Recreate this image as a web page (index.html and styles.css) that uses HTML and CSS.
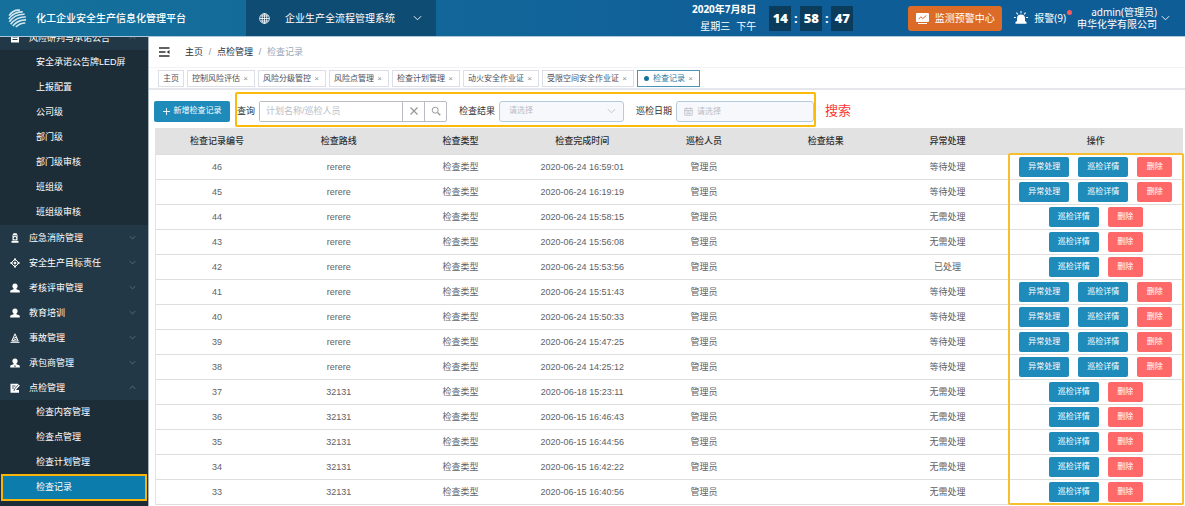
FILE: index.html
```html
<!DOCTYPE html>
<html lang="zh-CN">
<head>
<meta charset="utf-8">
<title>化工企业安全生产信息化管理平台</title>
<link rel="stylesheet" href="styles.css">
</head>
<body>
<svg class="defs" aria-hidden="true">
  <symbol id="down" viewBox="0 0 10 6"><path d="M1 1l4 4 4-4" fill="none" stroke="currentColor"/></symbol>
  <symbol id="up" viewBox="0 0 10 6"><path d="M1 5l4-4 4 4" fill="none" stroke="currentColor"/></symbol>
  <symbol id="user" viewBox="0 0 10 10"><path d="M5 .5c1.700 0 2.600 1.200 2.600 2.600 0 1-.5 2-1.200 2.500v.7l2.800 1c.4.200.6.500.6.900V9.500H.2V8.200c0-.4.2-.7.6-.9l2.800-1v-.7C2.900 5.100 2.400 4.100 2.400 3.100 2.400 1.700 3.300.5 5 .5z" fill="currentColor"/></symbol>
</svg>
<header class="topbar">
  <div class="brand">
    <svg class="logo" viewBox="0 0 20 20" fill="none" stroke="#d3e6ef" stroke-width="1.700"><path d="M1.200 7C4 2.500 8 .8 12.500 1.200M.9 10.500C4.500 5 9 2.800 15.500 3M1.400 13.500C5.500 7.500 10.500 5.200 17.500 5.500M2.800 16C7 10.500 12 8 18.800 8.400M5 17.800c3.500-4 8-6.600 14-6.400M8.200 19c2.500-2.600 5.500-4.300 10-4.300"/></svg>
    <span>化工企业安全生产信息化管理平台</span>
  </div>
  <button class="system" type="button">
    <svg class="globe" viewBox="0 0 12 12" fill="none" stroke="currentColor" stroke-width=".9"><circle cx="6" cy="6" r="5.300"/><ellipse cx="6" cy="6" rx="2.500" ry="5.300"/><path d="M6 .7v10.600M.7 6h10.600M1.500 3.300h9M1.500 8.700h9"/></svg>
    <span class="system-name">企业生产全流程管理系统</span>
    <svg class="chev"><use href="#down"/></svg>
  </button>
  <div class="today"><strong>2020年7月8日</strong><span class="weekday"><span>星期三</span><span>下午</span></span></div>
  <div class="clock"><b>14</b><i>:</i><b>58</b><i>:</i><b>47</b></div>
  <button class="monitor" type="button">
    <svg class="monitor-icon" viewBox="0 0 13 11"><path d="M1 0h11a1 1 0 0 1 1 1v7a1 1 0 0 1-1 1H1a1 1 0 0 1-1-1V1a1 1 0 0 1 1-1zM2 10h9v1H2z" fill="#fff"/><path d="M2.500 6.300l2.300-2.500 2 1.700 3.600-3" fill="none" stroke="#dc6b28"/></svg>
    <span>监测预警中心</span>
  </button>
  <button class="alarm" type="button">
    <svg class="bell" viewBox="0 0 14 14" fill="currentColor"><path d="M3 10V7.500a4 4 0 0 1 8 0V10l1.500 1v1.800h-11V11zM6.500 0h1v2.300h-1zM2 2l.8-.7 1.500 1.700-.8.700zM11.200 1.300l.8.700-1.500 1.700-.8-.7zM0 6h1.800v1H0zM12.200 6H14v1h-1.800z"/></svg>
    <span>报警(9)</span><span class="dot"></span>
  </button>
  <button class="account" type="button">
    <span class="who"><span>admin(管理员)</span><span>申华化学有限公司</span></span>
    <svg class="chev"><use href="#down"/></svg>
  </button>
</header>
<div class="body">
<nav class="side">
  <a class="group first" href="#"><svg viewBox="0 0 10 10"><path d="M1 1h8v8.500H1z" fill="currentColor"/><path d="M2.500 4h5M2.500 6.500h5" stroke="#223846"/></svg><span>风险研判与承诺公告</span><svg class="arrow"><use href="#up"/></svg></a>
  <a class="item" href="#">安全承诺公告牌LED屏</a>
  <a class="item" href="#">上报配置</a>
  <a class="item" href="#">公司级</a>
  <a class="item" href="#">部门级</a>
  <a class="item" href="#">部门级审核</a>
  <a class="item" href="#">班组级</a>
  <a class="item" href="#">班组级审核</a>
  <a class="group" href="#"><svg viewBox="0 0 10 10"><path d="M3.500.3h3l1 1.700v5.500h-5V2zM1.500 8h7v1.700h-7z" fill="currentColor"/><path d="M3 2.700h4" stroke="#223846" stroke-width=".7"/><circle cx="5" cy="5.300" r="1.200" fill="#223846"/></svg><span>应急消防管理</span><svg class="arrow"><use href="#down"/></svg></a>
  <a class="group" href="#"><svg viewBox="0 0 10 10" fill="none" stroke="currentColor"><path d="M5 1l4 4-4 4-4-4zM5 0v3M5 7v3M0 5h3M7 5h3"/><circle cx="5" cy="5" r="1" fill="currentColor"/></svg><span>安全生产目标责任</span><svg class="arrow"><use href="#down"/></svg></a>
  <a class="group" href="#"><svg><use href="#user"/></svg><span>考核评审管理</span><svg class="arrow"><use href="#down"/></svg></a>
  <a class="group" href="#"><svg><use href="#user"/></svg><span>教育培训</span><svg class="arrow"><use href="#down"/></svg></a>
  <a class="group" href="#"><svg viewBox="0 0 10 10" fill="none" stroke="currentColor"><path d="M5 .8L8.200 8H1.800zM3.500 5.500l3-1.500M3 7.500l4-1.800M.5 9.300h9"/></svg><span>事故管理</span><svg class="arrow"><use href="#down"/></svg></a>
  <a class="group" href="#"><svg viewBox="0 0 10 10"><use href="#user"/><path d="M5 7l.7 1.200L5 9.500l-.7-1.300z" fill="#223846"/></svg><span>承包商管理</span><svg class="arrow"><use href="#down"/></svg></a>
  <a class="group" href="#"><svg viewBox="0 0 10 10"><path d="M.5.700h7.500l1.500 1.800L6 7h3v2.700H.5z" fill="currentColor"/><path d="M2 3h3.500M2 5h2M4 8l.5-2L8.500 1.500" fill="none" stroke="#223846" stroke-width=".8"/><path d="M5 7l4.500-4.500" stroke="currentColor"/></svg><span>点检管理</span><svg class="arrow"><use href="#up"/></svg></a>
  <a class="item" href="#">检查内容管理</a>
  <a class="item" href="#">检查点管理</a>
  <a class="item" href="#">检查计划管理</a>
  <a class="item current" href="#">检查记录</a>
</nav>
<main class="main">
  <div class="crumbs">
    <svg class="fold" viewBox="0 0 11 10"><path d="M0 1h10.500M0 5h6.500M0 9h10.500" stroke="#303133" stroke-width="1.500"/><path d="M10.500 3v4L7.800 5z" fill="#303133"/></svg>
    <a href="#">主页</a><i>/</i><a href="#">点检管理</a><i>/</i><span class="here">检查记录</span>
  </div>
  <div class="tabs">
    <a class="tab" href="#">主页</a>
    <a class="tab" href="#">控制风险评估<i>×</i></a>
    <a class="tab" href="#">风险分级管控<i>×</i></a>
    <a class="tab" href="#">风险点管理<i>×</i></a>
    <a class="tab" href="#">检查计划管理<i>×</i></a>
    <a class="tab" href="#">动火安全作业证<i>×</i></a>
    <a class="tab" href="#">受限空间安全作业证<i>×</i></a>
    <a class="tab active" href="#">检查记录<i>×</i></a>
  </div>
  <div class="tools">
    <button class="add" type="button"><svg viewBox="0 0 8 8"><path d="M4 0v8M0 4h8" stroke="currentColor"/></svg>新增检查记录</button>
    <form class="search">
      <label for="q">查询</label>
      <div class="query">
        <input id="q" type="text" placeholder="计划名称/巡检人员">
        <button type="button" aria-label="清除"><svg viewBox="0 0 10 10"><path d="M1.500 1.500l7 7M8.500 1.500l-7 7" stroke="currentColor" stroke-width="1.300"/></svg></button>
        <button type="button" aria-label="搜索"><svg viewBox="0 0 10 10" fill="none" stroke="currentColor"><circle cx="4.200" cy="4.200" r="3"/><path d="M6.500 6.500L9.300 9.300" stroke-width="1.300"/></svg></button>
      </div>
      <label for="result">检查结果</label>
      <div class="field result"><select id="result"><option>请选择</option></select><svg class="chev"><use href="#down"/></svg></div>
      <label for="date">巡检日期</label>
      <div class="field date"><svg class="cal" viewBox="0 0 9 9" fill="none" stroke="currentColor" stroke-width=".8"><path d="M.8 1.500h7.400v6.700H.8zM.8 3.500h7.400M2.700.3v2M6.300.3v2M2.300 5h4.400M2.300 6.600h4.400"/></svg><input id="date" type="text" placeholder="请选择"></div>
    </form>
    <span class="note">搜索</span>
  </div>
  <div class="records">
  <table>
    <colgroup><col><col><col><col><col><col><col><col class="col-ops"></colgroup>
    <thead><tr><th>检查记录编号</th><th>检查路线</th><th>检查类型</th><th>检查完成时间</th><th>巡检人员</th><th>检查结果</th><th>异常处理</th><th>操作</th></tr></thead>
    <tbody>
      <tr><td>46</td><td>rerere</td><td>检查类型</td><td>2020-06-24 16:59:01</td><td>管理员</td><td></td><td>等待处理</td><td><div class="ops"><button type="button">异常处理</button><button type="button">巡检详情</button><button class="del" type="button">删除</button></div></td></tr>
      <tr><td>45</td><td>rerere</td><td>检查类型</td><td>2020-06-24 16:19:19</td><td>管理员</td><td></td><td>等待处理</td><td><div class="ops"><button type="button">异常处理</button><button type="button">巡检详情</button><button class="del" type="button">删除</button></div></td></tr>
      <tr><td>44</td><td>rerere</td><td>检查类型</td><td>2020-06-24 15:58:15</td><td>管理员</td><td></td><td>无需处理</td><td><div class="ops"><button type="button">巡检详情</button><button class="del" type="button">删除</button></div></td></tr>
      <tr><td>43</td><td>rerere</td><td>检查类型</td><td>2020-06-24 15:56:08</td><td>管理员</td><td></td><td>无需处理</td><td><div class="ops"><button type="button">巡检详情</button><button class="del" type="button">删除</button></div></td></tr>
      <tr><td>42</td><td>rerere</td><td>检查类型</td><td>2020-06-24 15:53:56</td><td>管理员</td><td></td><td>已处理</td><td><div class="ops"><button type="button">巡检详情</button><button class="del" type="button">删除</button></div></td></tr>
      <tr><td>41</td><td>rerere</td><td>检查类型</td><td>2020-06-24 15:51:43</td><td>管理员</td><td></td><td>等待处理</td><td><div class="ops"><button type="button">异常处理</button><button type="button">巡检详情</button><button class="del" type="button">删除</button></div></td></tr>
      <tr><td>40</td><td>rerere</td><td>检查类型</td><td>2020-06-24 15:50:33</td><td>管理员</td><td></td><td>等待处理</td><td><div class="ops"><button type="button">异常处理</button><button type="button">巡检详情</button><button class="del" type="button">删除</button></div></td></tr>
      <tr><td>39</td><td>rerere</td><td>检查类型</td><td>2020-06-24 15:47:25</td><td>管理员</td><td></td><td>等待处理</td><td><div class="ops"><button type="button">异常处理</button><button type="button">巡检详情</button><button class="del" type="button">删除</button></div></td></tr>
      <tr><td>38</td><td>rerere</td><td>检查类型</td><td>2020-06-24 14:25:12</td><td>管理员</td><td></td><td>等待处理</td><td><div class="ops"><button type="button">异常处理</button><button type="button">巡检详情</button><button class="del" type="button">删除</button></div></td></tr>
      <tr><td>37</td><td>32131</td><td>检查类型</td><td>2020-06-18 15:23:11</td><td>管理员</td><td></td><td>无需处理</td><td><div class="ops"><button type="button">巡检详情</button><button class="del" type="button">删除</button></div></td></tr>
      <tr><td>36</td><td>32131</td><td>检查类型</td><td>2020-06-15 16:46:43</td><td>管理员</td><td></td><td>无需处理</td><td><div class="ops"><button type="button">巡检详情</button><button class="del" type="button">删除</button></div></td></tr>
      <tr><td>35</td><td>32131</td><td>检查类型</td><td>2020-06-15 16:44:56</td><td>管理员</td><td></td><td>无需处理</td><td><div class="ops"><button type="button">巡检详情</button><button class="del" type="button">删除</button></div></td></tr>
      <tr><td>34</td><td>32131</td><td>检查类型</td><td>2020-06-15 16:42:22</td><td>管理员</td><td></td><td>无需处理</td><td><div class="ops"><button type="button">巡检详情</button><button class="del" type="button">删除</button></div></td></tr>
      <tr><td>33</td><td>32131</td><td>检查类型</td><td>2020-06-15 16:40:56</td><td>管理员</td><td></td><td>无需处理</td><td><div class="ops"><button type="button">巡检详情</button><button class="del" type="button">删除</button></div></td></tr>
    </tbody>
  </table>
  </div>
</main>
</div>
</body>
</html>
```
FILE: styles.css
```css
* { box-sizing: border-box; }

body {
  margin: 0;
  height: 100vh;
  display: flex;
  flex-direction: column;
  overflow: hidden;
  background: #fff;
  color: #303133;
  font: 9px/12px "Liberation Sans", "Noto Sans CJK SC", sans-serif;
}

button, input, select { font: inherit; color: inherit; margin: 0; }
button { border: 0; padding: 0; background: none; cursor: pointer; white-space: nowrap; }
a { color: inherit; text-decoration: none; }
i { font-style: normal; }
svg { display: block; flex: none; }
.defs { display: none; }
.chev { width: 9px; height: 6px; }

/* top bar */
.topbar {
  flex: none;
  display: flex;
  align-items: center;
  height: 37px;
  border-bottom: 1px solid #a9c8dc;
  background: linear-gradient(90deg, #15719b, #0f5d97 70%);
  color: #fff;
  font: 10px/14px "Noto Sans", "Noto Sans CJK SC", sans-serif;
}
.brand { width: 246px; padding-left: 8px; display: flex; align-items: center; gap: 9px; font-weight: 500; }
.logo { width: 19px; height: 19px; }
.system {
  width: 190px;
  height: 36px;
  padding: 0 14px 0 13px;
  display: flex;
  align-items: center;
  background: #0f4c74;
}
.globe { width: 11px; height: 11px; margin-right: 15px; }
.system-name { flex: 1; text-align: left; }
.today { margin-left: auto; display: flex; flex-direction: column; align-items: flex-end; line-height: 17px; }
.weekday { display: flex; gap: 6px; }
.clock { display: flex; align-items: center; margin-left: 13px; font-size: 13px; font-weight: 700; }
.clock b { width: 22px; line-height: 25px; text-align: center; background: #0c3c5c; }
.clock i { width: 9px; text-align: center; }
.monitor {
  width: 94px;
  height: 25px;
  margin-left: 55px;
  display: flex;
  align-items: center;
  justify-content: center;
  gap: 6px;
  border-radius: 3px;
  background: #dc6b28;
}
.monitor-icon { width: 13px; height: 11px; }
.alarm { position: relative; margin-left: 12px; display: flex; align-items: center; gap: 6px; }
.bell { width: 14px; height: 14px; }
.dot { position: absolute; top: -1px; right: -6px; width: 5px; height: 5px; border-radius: 50%; background: #ff5a5f; }
.account { margin: 0 15px 0 11px; display: flex; align-items: center; gap: 4px; line-height: 12px; }
.who { display: flex; flex-direction: column; align-items: flex-end; }

/* side menu */
.body { flex: 1; min-height: 0; display: flex; }
.side { flex: none; width: 148px; overflow: hidden; background: #1c2d38; color: #fff; }
.group { display: flex; align-items: center; height: 25px; padding: 0 12px 0 10px; background: #223846; }
.group.first { margin-top: -12px; }
.group > svg { width: 10px; height: 10px; margin-right: 9px; }
.group span { flex: 1; }
.group > .arrow { width: 7px; height: 5px; margin: 0; color: #6f7f8a; }
.item { display: block; padding-left: 36px; line-height: 25px; }
.item.current { background: #0b7cab; outline: 2px solid #f7b50c; outline-offset: -1px; margin: 0 2px; padding-left: 34px; }

/* page head */
.main { flex: 1; min-width: 0; border-left: 1px solid #a5b3bb; }
.crumbs { display: flex; align-items: center; height: 30px; padding-left: 10px; }
.fold { width: 11px; height: 10px; margin-right: 15px; }
.crumbs i { width: 14px; text-align: center; color: #909399; }
.here { color: #97a8be; }
.tabs {
  display: flex;
  gap: 3px;
  padding: 2px 9px 1px;
  border-top: 1px solid #f3f3f5;
  border-bottom: 2px solid #e6e7ec;
}
.tab {
  display: flex;
  align-items: center;
  height: 17px;
  padding: 0 4px;
  border: 1px solid #dcdfe8;
  color: #495060;
  font-size: 8px;
}
.tab i { width: 10px; text-align: right; padding-right: 2px; color: #909399; }
.tab.active { border-color: #4a94b4; color: #1d7ba5; }
.tab.active::before { content: ""; width: 5px; height: 5px; margin: 0 4px 0 2px; border-radius: 50%; background: #14719b; }

/* toolbar */
.tools { display: flex; align-items: center; height: 38px; padding: 4px 0 0 5px; }
.add {
  display: flex;
  align-items: center;
  justify-content: center;
  gap: 4px;
  width: 76px;
  height: 21px;
  border-radius: 2px;
  background: #1e8bbb;
  color: #fff;
  font-size: 8px;
}
.add svg { width: 7px; height: 7px; }
.search { position: relative; display: flex; align-items: center; margin-left: 7px; }
.search::after {
  content: "";
  position: absolute;
  inset: -9px -2px -5px -2px;
  border: 2px solid #fcba0b;
  border-radius: 2px;
  pointer-events: none;
}
.search label { margin-right: 4px; }
.query { display: flex; height: 21px; width: 188px; margin-right: 12px; border: 1px solid #b9bcc2; border-radius: 2px; }
.query input { flex: 1; min-width: 0; border: 0; padding: 0 6px; outline: 0; }
.query button { width: 22px; border-left: 1px solid #b9bcc2; color: #999; display: flex; align-items: center; justify-content: center; }
.query svg { width: 10px; height: 10px; }
::placeholder { color: #b9bec8; opacity: 1; }
.field {
  display: flex;
  align-items: center;
  height: 21px;
  padding: 0 7px;
  border: 1px solid #b4cbdf;
  border-radius: 3px;
  background: #f6f8fb;
  color: #b9bec8;
  font-size: 8px;
}
.field select, .field input { flex: 1; min-width: 0; height: 100%; padding: 0; border: 0; outline: 0; background: none; appearance: none; }
.result { width: 125px; padding-left: 9px; margin-right: 12px; }
.date { width: 138px; }
.cal { width: 9px; height: 9px; margin-right: 4px; }
.note { margin-left: 11px; color: #fb3a33; font-size: 13px; }

/* records */
.records { position: relative; margin: 0 2px 0 6px; }
.records::after {
  content: "";
  position: absolute;
  inset: 25px -1px 0 83%;
  border: 2px solid #f7bf2f;
  border-radius: 2px;
  pointer-events: none;
}
table { width: 100%; table-layout: fixed; border-collapse: separate; border-spacing: 0; border-left: 1px solid #e4e4e4; }
.col-ops { width: 17%; }
th, td { padding: 0; text-align: center; border-bottom: 1px solid #dedede; }
th { height: 27px; background: #e2e2e2; font-weight: 500; }
td { height: 25px; color: #606266; }
.ops { display: flex; justify-content: center; gap: 9px; }
.ops button { width: 50px; height: 20px; border-radius: 2px; background: #1e8bbb; color: #fff; font-size: 8px; }
.ops .del { width: 35px; background: #ff6868; }
```
